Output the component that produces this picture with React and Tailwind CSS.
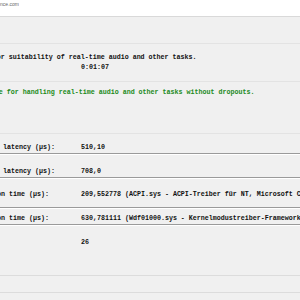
import React from "react";

const mono = "font-['Liberation_Mono','DejaVu_Sans_Mono',monospace]";

function Row({ label, value, extra, labelEnd }) {
  return (
    <div className="flex whitespace-nowrap leading-[10px]">
      <div className={`flex justify-end overflow-hidden shrink-0 ${labelEnd}`}>
        <span>{label}</span>
      </div>
      <div className="whitespace-pre">{value}</div>
      {extra && <div className="whitespace-pre"> {extra}</div>}
    </div>
  );
}

function Rule() {
  return <hr className="border-t border-b border-t-[#9a9a9a] border-b-[#ffffff]" />;
}

export default function App() {
  return (
    <div
      className={`w-[300px] h-[300px] overflow-hidden bg-[#f0f0f0] text-[6.67px] font-bold text-[#111] ${mono}`}
    >
      {/* site header */}
      <div className="h-[17px] bg-white border-b border-[#d9d9d9] font-['Liberation_Sans',Arial,sans-serif] font-normal text-[5px] text-[#666]">
        <div className="w-[19px] flex justify-end overflow-hidden whitespace-nowrap pt-[1px] leading-[6px]">
          <span>www.resplendence.com</span>
        </div>
      </div>

      <div className="h-[27px] border-b border-[#e3e3e3]" />

      {/* conclusion */}
      <div className="h-[38px] border-b border-[#e3e3e3] pt-[8px] leading-[10px] whitespace-pre">
        <div className="-ml-[127px]">
          Your system is being analyzed for suitability of real-time audio and other tasks.
        </div>
        <div className="pl-[81px]">0:01:07</div>
      </div>

      <div className="h-[52px] border-b border-[#e3e3e3] pt-[5px] leading-[10px] whitespace-pre text-[#1a8a1a]">
        <div className="-ml-[133px]">
          Your system appears to be suitable for handling real-time audio and other tasks without dropouts.
        </div>
      </div>

      <div className="h-[19px] pt-[8px]">
        <Row
          label="Highest measured interrupt to process latency (µs):"
          value="510,10"
          labelEnd="w-[81px] pr-[26px]"
        />
      </div>
      <Rule />

      <div className="h-[22px] pt-[11px]">
        <Row
          label="Highest measured interrupt to DPC latency (µs):"
          value="708,0"
          labelEnd="w-[81px] pr-[26px]"
        />
      </div>
      <Rule />

      <div className="h-[28px] pt-[10px]">
        <Row
          label="Highest ISR routine execution time (µs):"
          value="209,552778"
          extra="(ACPI.sys - ACPI-Treiber für NT, Microsoft Corporation"
          labelEnd="w-[81px] pr-[32px]"
        />
      </div>
      <Rule />

      <div className="h-[15px] pt-[4px]">
        <Row
          label="Highest DPC routine execution time (µs):"
          value="630,781111"
          extra="(Wdf01000.sys - Kernelmodustreiber-Frameworklaufzeit, Microsoft Corporation"
          labelEnd="w-[81px] pr-[32px]"
        />
      </div>
      <Rule />

      <div className="h-[50px] border-b border-[#dcdcdc] pt-[11px] leading-[10px]">
        <div className="pl-[81px]">26</div>
      </div>

      <div className="h-[17px] border-b border-[#dcdcdc]" />
    </div>
  );
}
